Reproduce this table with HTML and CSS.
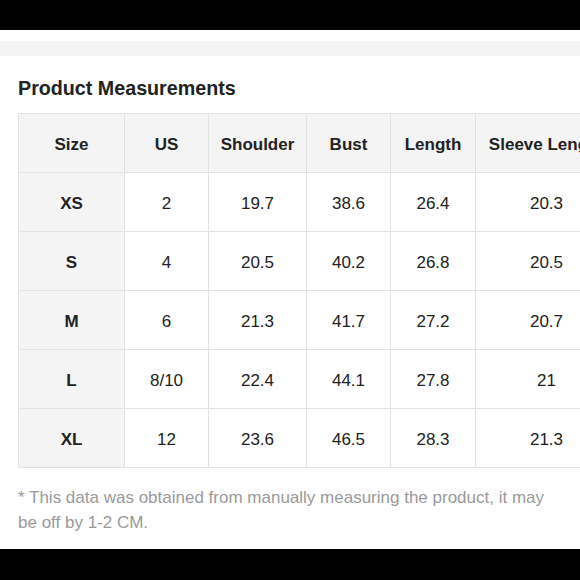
FILE: index.html
```html
<!DOCTYPE html>
<html>
<head>
<meta charset="utf-8">
<link rel="stylesheet" href="styles.css">
</head>
<body>
<div class="topbar"></div>
<div class="band"></div>
<main class="content">
  <h2 class="title">Product Measurements</h2>
  <div class="table-wrap">
    <table class="sizes">
      <colgroup>
        <col class="c1"><col class="c2"><col class="c3"><col class="c4"><col class="c5"><col class="c6">
      </colgroup>
      <thead>
        <tr><th>Size</th><th>US</th><th>Shoulder</th><th>Bust</th><th>Length</th><th>Sleeve Length</th></tr>
      </thead>
      <tbody>
        <tr><th>XS</th><td>2</td><td>19.7</td><td>38.6</td><td>26.4</td><td>20.3</td></tr>
        <tr><th>S</th><td>4</td><td>20.5</td><td>40.2</td><td>26.8</td><td>20.5</td></tr>
        <tr><th>M</th><td>6</td><td>21.3</td><td>41.7</td><td>27.2</td><td>20.7</td></tr>
        <tr><th>L</th><td>8/10</td><td>22.4</td><td>44.1</td><td>27.8</td><td>21</td></tr>
        <tr><th>XL</th><td>12</td><td>23.6</td><td>46.5</td><td>28.3</td><td>21.3</td></tr>
      </tbody>
    </table>
  </div>
  <p class="note">* This data was obtained from manually measuring the product, it may be off by 1-2 CM.</p>
</main>
<div class="bottombar"></div>
</body>
</html>
```
FILE: styles.css
```css
html, body {
  margin: 0;
  padding: 0;
  background: #fff;
  overflow: hidden;
  font-family: "Liberation Sans", Arial, sans-serif;
}
.topbar {
  height: 30px;
  background: #000;
}
.band {
  height: 15px;
  margin-top: 11px;
  background: #f4f4f4;
}
.content {
  padding: 0 0 0 18px;
}
.title {
  margin: 0;
  padding-top: 20px;
  font-size: 19.7px;
  line-height: 24px;
  font-weight: bold;
  color: #222;
}
.table-wrap {
  margin-top: 13px;
  width: 700px;
}
.sizes {
  border-collapse: collapse;
  table-layout: fixed;
  width: 599px;
  font-size: 17px;
  color: #222;
}
.c1 { width: 106px; }
.c2 { width: 84px; }
.c3 { width: 98px; }
.c4 { width: 84px; }
.c5 { width: 85px; }
.c6 { width: 142px; }
.sizes th, .sizes td {
  border: 1px solid #e2e2e2;
  height: 55px;
  padding: 3px 0 0 0;
  text-align: center;
  vertical-align: middle;
  white-space: nowrap;
  overflow: hidden;
}
.sizes thead th {
  background: #f4f4f4;
  font-weight: bold;
}
.sizes tbody th {
  background: #f4f4f4;
  font-weight: bold;
}
.sizes td {
  background: #fff;
  font-weight: normal;
}
.note {
  margin: 17px 0 0 0;
  width: 540px;
  font-size: 17px;
  line-height: 25px;
  color: #9a9a9a;
}
.bottombar {
  margin-top: 14px;
  height: 60px;
  background: #000;
}
```
